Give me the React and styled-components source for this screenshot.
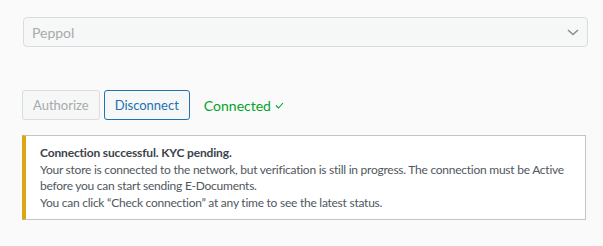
import React from "react";
import styled, { createGlobalStyle } from "styled-components";

const Global = createGlobalStyle`
  html, body { margin: 0; padding: 0; background: #fafafa; }
  body { font-family: Lato, "Liberation Sans", sans-serif; color: #3c434a; }
`;

const Page = styled.div`
  padding: 17px 15px 0 22px;
  display: flex;
  flex-direction: column;
  align-items: flex-start;
`;

const SelectBox = styled.div`
  box-sizing: border-box;
  margin-left: 1px;
  width: 565px;
  height: 30px;
  border: 1px solid #dcdcde;
  border-radius: 4px;
  background: #f6f7f7;
  display: flex;
  align-items: center;
  justify-content: space-between;
  padding: 0 8px 0 8px;
  font-size: 14px;
  color: #a7aaad;
`;

const Chevron = styled.svg`
  width: 12px;
  height: 7px;
`;

const Actions = styled.div`
  margin-top: 43px;
  display: flex;
  align-items: center;
`;

const Button = styled.button`
  box-sizing: border-box;
  height: 30px;
  padding: 0 10px;
  margin-right: 4px;
  border-radius: 3px;
  border: 1px solid ${(p) => (p.$disabled ? "#dcdcde" : "#2271b1")};
  color: ${(p) => (p.$disabled ? "#a7aaad" : "#2271b1")};
  background: #f6f7f7;
  font-family: inherit;
  font-size: 13px;
  line-height: 28px;
  cursor: ${(p) => (p.$disabled ? "default" : "pointer")};
`;

const Status = styled.span`
  margin-left: 10px;
  color: #00a32a;
  font-size: 14px;
  display: inline-flex;
  align-items: center;
  gap: 4px;
`;

const Notice = styled.div`
  box-sizing: border-box;
  margin-top: 15px;
  width: 564px;
  background: #fff;
  border: 1px solid #c3c4c7;
  border-left: 4px solid #dba617;
  box-shadow: 0 1px 1px rgba(0, 0, 0, 0.04);
  padding: 9px 14px 8px 14px;
  font-size: 12px;
  line-height: 16.5px;
  letter-spacing: -0.25px;
  color: #50575e;
`;

const NoticeTitle = styled.div`
  font-weight: 700;
  letter-spacing: -0.15px;
  color: #3c434a;
`;

const NoticeLine = styled.div``;

export default function App() {
  return (
    <>
      <Global />
      <Page>
        <SelectBox>
          <span>Peppol</span>
          <Chevron viewBox="0 0 12 7">
            <path d="M1 1 L6 5.5 L11 1" fill="none" stroke="#8c8f94" strokeWidth="1.6" />
          </Chevron>
        </SelectBox>
        <Actions>
          <Button $disabled disabled>Authorize</Button>
          <Button>Disconnect</Button>
          <Status>
            Connected
            <svg width="9" height="7" viewBox="0 0 9 7">
              <path d="M1 3.5 L3.5 6 L8 1" fill="none" stroke="#00a32a" strokeWidth="1.1" />
            </svg>
          </Status>
        </Actions>
        <Notice>
          <NoticeTitle>Connection successful. KYC pending.</NoticeTitle>
          <NoticeLine>
            Your store is connected to the network, but verification is still in progress. The connection must be Active
            before you can start sending E-Documents.
          </NoticeLine>
          <NoticeLine>You can click “Check connection” at any time to see the latest status.</NoticeLine>
        </Notice>
      </Page>
    </>
  );
}
